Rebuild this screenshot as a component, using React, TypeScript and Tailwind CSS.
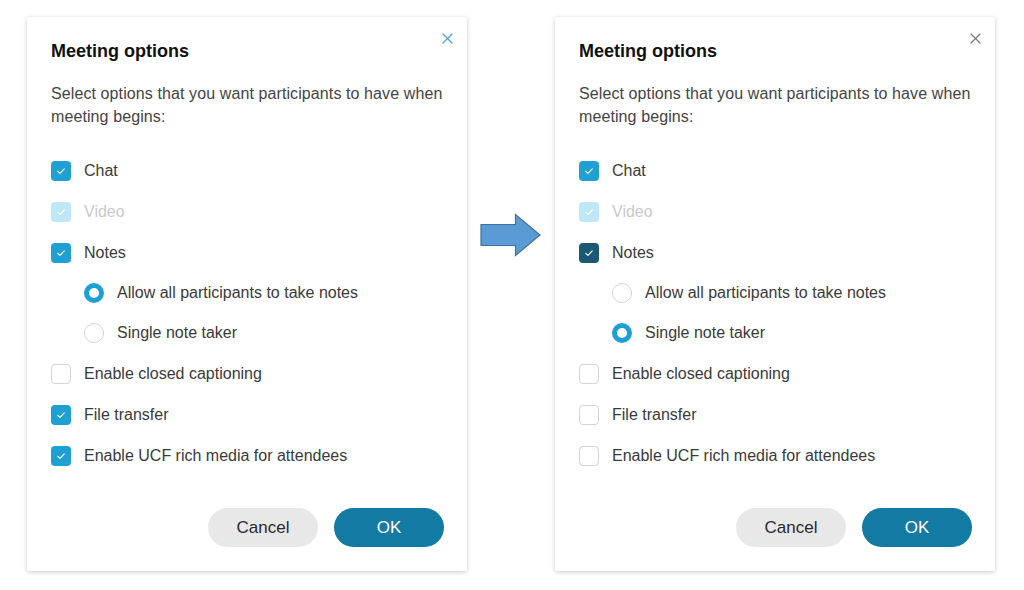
import React from "react";

type Opt = {
  kind: "check" | "radio";
  label: string;
  on: boolean;
  disabled?: boolean;
  dark?: boolean;
};

function CheckBox({ on, disabled, dark }: { on: boolean; disabled?: boolean; dark?: boolean }) {
  if (!on) {
    return <span className="w-[20px] h-[20px] rounded-[4px] border border-[#d4d4d4] bg-white shrink-0" />;
  }
  const bg = disabled ? "bg-[#bfe8f7]" : dark ? "bg-[#1b5874]" : "bg-[#1fa0d3]";
  return (
    <span className={`w-[20px] h-[20px] rounded-[4px] ${bg} flex items-center justify-center shrink-0`}>
      <svg width="12" height="12" viewBox="0 0 12 12" fill="none">
        <path d="M2.8 6.3 L5 8.4 L9.3 3.8" stroke="white" strokeWidth="1.1" strokeLinecap="round" strokeLinejoin="round" />
      </svg>
    </span>
  );
}

function Radio({ on }: { on: boolean }) {
  return on ? (
    <span className="w-[20px] h-[20px] rounded-full border-[5px] border-[#1fa0d3] bg-white shrink-0" />
  ) : (
    <span className="w-[20px] h-[20px] rounded-full border border-[#d4d4d4] bg-white shrink-0" />
  );
}

function Dialog({ options, closeColor }: { options: Opt[]; closeColor: string }) {
  return (
    <div className="relative w-[440px] h-[554px] bg-white shadow-[0_1px_4px_rgba(0,0,0,0.22)] rounded-[2px] px-[24px] pt-[23px] flex flex-col shrink-0">
      <button className="absolute top-[14px] right-[13px] w-[14px] h-[14px] flex items-center justify-center">
        <svg width="11" height="11" viewBox="0 0 11 11" fill="none">
          <path d="M1 1 L10 10 M10 1 L1 10" stroke={closeColor} strokeWidth="1.2" strokeLinecap="round" />
        </svg>
      </button>
      <h2 className="text-[18px] leading-[22px] font-bold text-[#111]">Meeting options</h2>
      <p className="mt-[20px] text-[16px] leading-[23px] text-[#444] tracking-[0.1px]">
        Select options that you want participants to have when meeting begins:
      </p>
      <div className="mt-[22px] flex flex-col">
        {options.map((o) =>
          o.kind === "check" ? (
            <div key={o.label} className="h-[41px] flex items-center gap-[13px]">
              <CheckBox on={o.on} disabled={o.disabled} dark={o.dark} />
              <span className={`text-[16px] ${o.disabled ? "text-[#c9c9c9]" : "text-[#3a3a3a]"}`}>{o.label}</span>
            </div>
          ) : (
            <div key={o.label} className="h-[40px] flex items-center gap-[13px] pl-[33px]">
              <Radio on={o.on} />
              <span className="text-[16px] text-[#3a3a3a]">{o.label}</span>
            </div>
          )
        )}
      </div>
      <div className="mt-auto mb-[24px] flex justify-end gap-[16px] -mr-[1px]">
        <button className="w-[110px] h-[39px] rounded-full bg-[#e8e8e8] text-[17px] text-[#2a2a2a]">Cancel</button>
        <button className="w-[110px] h-[39px] rounded-full bg-[#137aa3] text-[17px] text-white">OK</button>
      </div>
    </div>
  );
}

const left: Opt[] = [
  { kind: "check", label: "Chat", on: true },
  { kind: "check", label: "Video", on: true, disabled: true },
  { kind: "check", label: "Notes", on: true },
  { kind: "radio", label: "Allow all participants to take notes", on: true },
  { kind: "radio", label: "Single note taker", on: false },
  { kind: "check", label: "Enable closed captioning", on: false },
  { kind: "check", label: "File transfer", on: true },
  { kind: "check", label: "Enable UCF rich media for attendees", on: true },
];

const right: Opt[] = [
  { kind: "check", label: "Chat", on: true },
  { kind: "check", label: "Video", on: true, disabled: true },
  { kind: "check", label: "Notes", on: true, dark: true },
  { kind: "radio", label: "Allow all participants to take notes", on: false },
  { kind: "radio", label: "Single note taker", on: true },
  { kind: "check", label: "Enable closed captioning", on: false },
  { kind: "check", label: "File transfer", on: false },
  { kind: "check", label: "Enable UCF rich media for attendees", on: false },
];

export default function App() {
  return (
    <div
      className="w-[1024px] h-[590px] bg-white pl-[27px] pt-[17px] flex items-start"
      style={{ fontFamily: '"Liberation Sans", Arial, sans-serif' }}
    >
      <Dialog options={left} closeColor="#4aa3cf" />
      <div className="w-[88px] h-[554px] flex items-start justify-center pt-[196px]">
        <svg width="62" height="44" viewBox="0 0 62 44">
          <path d="M1 11.5 H35.5 V1.5 L60 22 L35.5 42.5 V32.5 H1 Z" fill="#5b9bd5" stroke="#41719c" strokeWidth="1.2" />
        </svg>
      </div>
      <Dialog options={right} closeColor="#7a7a7a" />
    </div>
  );
}
